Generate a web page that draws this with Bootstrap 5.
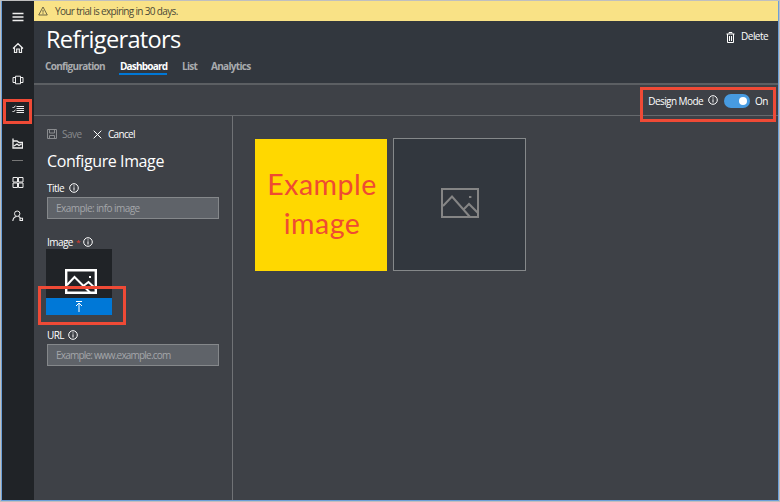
<!DOCTYPE html>
<html lang="en">
<head>
<meta charset="utf-8">
<meta name="viewport" content="width=device-width, initial-scale=1">
<title>Refrigerators</title>
<link href="https://cdn.jsdelivr.net/npm/bootstrap@5.3.0/dist/css/bootstrap.min.css" rel="stylesheet">
<style>
body{width:780px;height:502px;overflow:hidden;background:#b9bdc0;font:10px/14px "Open Sans","Noto Sans",sans-serif;color:#fff}
svg{display:block;flex:none;fill:none;stroke:currentColor}
.app-frame{width:780px;height:502px;border:1px solid #bfbfbf}
.app-shell{border:solid #6c9fd8;border-width:0 1px 1px 1px;background:#3e4147}
.side-rail{width:32px;padding-right:1px;background:#202327;color:#eee}
.rail-link{height:31.6px;color:inherit}
.rail-sep{width:11px;height:1px;background:#777;margin:1px 0 6px}
.trial{height:20px;background:#f9e286;color:#4c4937;padding-left:4px}
.trial span{margin-left:7px;letter-spacing:-.65px}
.page-head{height:64px;background:#32373e;border-bottom:2px solid #5c5f63;padding:0 10px 0 11px}
.page-title{font-size:23.6px;line-height:34px;margin:1px 0 0 1px;font-weight:400;letter-spacing:-.7px}
.tabs-row{margin-top:3px}
.tabs-row .nav-link{padding:0;color:#a9abae;font-size:10px;font-weight:700;height:16px;letter-spacing:-.7px;white-space:nowrap}
.tabs-row .tab-conf{width:61px}
.tabs-row .nav-link.active{color:#fff;border-bottom:2px solid #0078d7;letter-spacing:-.8px;width:48px;margin:0 15px 0 13px;padding-left:1px}
.tabs-row .tab-list{width:29px}
.del{padding-top:8px;height:30px;letter-spacing:-.55px}
.del svg{margin:3px 6px 0 0}
.mode-bar{height:31px;border-bottom:1px solid #66696d;padding:2px 9px 0 0;letter-spacing:-.57px}
.mode-bar svg{margin:0 6px 2px 5px}
.mode-bar .on-text{margin-left:5px;width:14px}
.switch{width:26px;height:14px;border-radius:7px;background:#479be1;padding:3px}
.switch i{display:block;width:8px;height:8px;border-radius:50%;background:#fff}
.edit-panel{width:199px;border-right:1px solid #707276;padding:11px 13px 0;letter-spacing:-.55px}
.save-btn{color:#898b8e;width:46px;gap:5px}
.cancel-btn{gap:6px;letter-spacing:-.7px}
.panel-title{font-size:16px;line-height:22px;margin:9px 0 0;font-weight:400;letter-spacing:-.4px}
.lbl{height:14px;gap:4px}
.lbl svg{margin-bottom:1px}
.lbl-title{margin:9px 0 2px}
.lbl-title svg{margin-left:1px}
.lbl-image{margin-top:16px;gap:3px}
.lbl-url{margin:13px 0 2px}
.req{color:#e0392b;letter-spacing:0;font-size:8px}
.field{height:22px;width:172px;border:1px solid #85888b;border-radius:0;background:#5f6369;color:#fff;font-size:10px;padding:0 8px;letter-spacing:-.55px}
.field-url{letter-spacing:-.8px}
.field:focus{background:#5f6369;color:#fff}
.field::placeholder{color:#a4a6a9;opacity:1}
.thumb{width:66px;height:66px;background:#202327;margin-left:-1px}
.thumb-pic{padding:0 0 4px 4px}
.up{height:17px;background:#0078d7}
.canvas{padding:22px;gap:6px}
.tile{width:133px;height:133px}
.tile-yellow{background:#ffd800;color:#ef4b32;font:400 28.500px/39px Lato,"Open Sans",sans-serif;letter-spacing:.5px;width:132px;height:132px;margin-top:1px;padding:26px 0 0 2px}
.tile-empty{background:#32373e;border:1px solid #85888a;color:#858585;padding-bottom:3px}
.mark-box{border:3px solid #ef4a36;pointer-events:none}
.mark-rail{left:2px;top:98px;width:29px;height:25px}
.mark-mode{left:639px;top:86px;width:136px;height:35px}
.mark-up{left:37px;top:285px;width:88px;height:39px}
</style>
</head>
<body>
<svg class="d-none">
<symbol id="info" viewBox="0 0 10 10"><circle cx="5" cy="5" r="4.3" stroke-width="1"/><path d="M5 4.300v3.200M5 2.400v1.100"/></symbol>
<symbol id="pic" viewBox="0 0 38 30"><path stroke-width="2" d="M1 1h36v28H1zM2 18l9-9.500L29 29M23 21l5-5 9 9"/><path stroke-width="2" d="M28 9h2.400"/></symbol>
<symbol id="pic-bold" viewBox="0 0 32 25"><path stroke-width="2.4" d="M1.200 1.200h29.600v22.600H1.200z"/><path stroke-width="2" d="M2 16l7.500-8L25 23.500M19 16.500l4.500-3.500L31 20M24 8h2"/></symbol>
</svg>
<div class="app-frame position-relative">
<div class="app-shell d-flex h-100">
<nav class="side-rail d-flex flex-column align-items-center">
<a class="rail-link d-flex align-items-center"><svg width="12" height="10"><path d="M.5 1.500h11M.5 5h11M.5 8.500h11" stroke-width="1.3"/></svg></a>
<a class="rail-link d-flex align-items-center"><svg width="12" height="12"><path d="M1 6.500L6 1.700l5 4.800M2.500 5.500v5h2.200V7h2.600v3.500h2.200v-5" stroke-width="1.2"/></svg></a>
<a class="rail-link d-flex align-items-center"><svg width="12" height="10"><path d="M3.500 1.200h5v7.600h-5zM3 2.500H1v5h2M9 2.500h2v5H9"/></svg></a>
<a class="rail-link d-flex align-items-center"><svg class="mb-1" width="12" height="9"><path d="M4.500 1.500H12M4.500 3.500H12M4.500 5.500H12M4.500 7.500H12"/><path d="M.5 2l1 1L3.500.7M.5 6l1 1 2-2.300"/></svg></a>
<a class="rail-link d-flex align-items-center"><svg width="11" height="11"><path d="M1 .5v9.500h9.500V4.500H7L5 3H1M2 8l3-2 2 1.500L9.500 6" stroke-width="1.3"/></svg></a>
<div class="rail-sep"></div>
<a class="rail-link d-flex align-items-center"><svg width="12" height="11"><path d="M1 .5h4.500v4.500H1zM6.500 .5H11v4.500H6.500zM1 6h4.500v4.500H1zM6.500 6H11v4.500H6.500z"/></svg></a>
<a class="rail-link d-flex align-items-center"><svg class="mt-1" width="12" height="12"><circle cx="5.2" cy="3.7" r="2.7"/><path d="M.8 11c.3-2.600 1.700-4.200 3.700-4.500M6.500 6.200l2 2M8 8.200h2.500v2.300H8z" stroke-width="1.1"/></svg></a>
</nav>
<div class="flex-grow-1 d-flex flex-column">
<div class="trial d-flex align-items-center"><svg width="10" height="10"><path d="M5 1L9.300 9H.7zM5 4v2.700M5 7.200v1" stroke-width=".8"/></svg><span>Your trial is expiring in 30 days.</span></div>
<header class="page-head d-flex justify-content-between">
<div><h1 class="page-title">Refrigerators</h1>
<nav class="nav tabs-row"><a class="nav-link tab-conf">Configuration</a><a class="nav-link active">Dashboard</a><a class="nav-link tab-list">List</a><a class="nav-link tab-ana">Analytics</a></nav></div>
<div class="del d-flex"><svg width="9" height="11"><path d="M.5 2h8M3 1.500V.5h3v1M1.500 2v8.500h6V2M3.500 4v5M5.500 4v5"/></svg><span>Delete</span></div>
</header>
<div class="mode-bar d-flex align-items-center justify-content-end"><span>Design Mode</span><svg width="10" height="10"><use href="#info"/></svg><span class="switch d-flex justify-content-end"><i></i></span><span class="on-text">On</span></div>
<div class="d-flex flex-grow-1">
<section class="edit-panel">
<div class="d-flex align-items-center"><span class="save-btn d-flex align-items-center"><svg width="10" height="10"><path d="M.5.5h9v9h-9zM2.500.5v3.500h5V.5M2.500 9.500V6.500h5v3"/></svg><span>Save</span></span><span class="cancel-btn d-flex align-items-center"><svg width="9" height="9"><path d="M.7.7l7.600 7.600M8.300.7L.7 8.300"/></svg><span>Cancel</span></span></div>
<h2 class="panel-title">Configure Image</h2>
<label class="lbl lbl-title d-flex align-items-center">Title<svg width="10" height="10"><use href="#info"/></svg></label>
<input class="form-control field" placeholder="Example: info image">
<label class="lbl lbl-image d-flex align-items-center">Image<span class="req">*</span><svg width="10" height="10"><use href="#info"/></svg></label>
<div class="thumb d-flex flex-column"><div class="thumb-pic flex-grow-1 d-flex justify-content-center align-items-end"><svg width="32" height="25"><use href="#pic-bold"/></svg></div><div class="up d-flex align-items-center justify-content-center"><svg width="8" height="11"><path d="M1 .5h6M4 2.500V11M1 5l3-3 3 3"/></svg></div></div>
<label class="lbl lbl-url d-flex align-items-center">URL<svg width="10" height="10"><use href="#info"/></svg></label>
<input class="form-control field field-url" placeholder="Example: www.example.com">
</section>
<main class="canvas d-flex align-items-start">
<div class="tile-yellow text-center"><div>Example</div><div>image</div></div>
<div class="tile tile-empty d-flex align-items-center justify-content-center"><svg width="38" height="30"><use href="#pic"/></svg></div>
</main>
</div>
</div>
</div>
<div class="mark-box mark-rail position-absolute"></div><div class="mark-box mark-mode position-absolute"></div><div class="mark-box mark-up position-absolute"></div>
</div>
<script src="https://cdn.jsdelivr.net/npm/bootstrap@5.3.0/dist/js/bootstrap.bundle.min.js"></script>
</body>
</html>
